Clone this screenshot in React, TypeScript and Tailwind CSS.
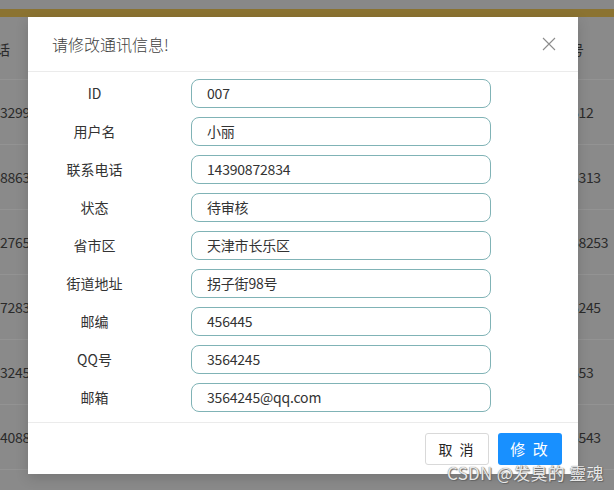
import React from "react";

const rows = [
  { l: "32990876", r: "15612" },
  { l: "88632145", r: "156313" },
  { l: "27654321", r: "1568253" },
  { l: "72831234", r: "156245" },
  { l: "32456789", r: "15653" },
  { l: "40881234", r: "156543" },
];

const fields = [
  { label: "ID", value: "007" },
  { label: "用户名", value: "小丽" },
  { label: "联系电话", value: "14390872834" },
  { label: "状态", value: "待审核" },
  { label: "省市区", value: "天津市长乐区" },
  { label: "街道地址", value: "拐子街98号" },
  { label: "邮编", value: "456445" },
  { label: "QQ号", value: "3564245" },
  { label: "邮箱", value: "3564245@qq.com" },
];

const font = { fontFamily: '"Noto Sans CJK SC", "Noto Sans", sans-serif' };

export default function App() {
  return (
    <div
      className="relative w-[614px] h-[490px] overflow-hidden bg-[#8a8a8a] text-[14px]"
      style={font}
    >
      {/* background page (dimmed) */}
      <div className="flex flex-col">
        <div className="h-[9px] bg-[#888888]" />
        <div className="h-[8px] bg-[#8b7331]" />
        <div className="h-[63px] border-b border-[#939393] flex items-center pt-[2px] text-[#2a2a2a]">
          <span className="-ml-[18px] w-[60px]">电话</span>
          <span className="ml-auto w-[58px]">账号</span>
        </div>
        {rows.map((r, i) => (
          <div
            key={i}
            className="h-[65px] border-b border-[#939393] flex items-center text-[#2a2a2a] tracking-[-0.3px]"
          >
            <span className="w-[100px]">{r.l}</span>
            <span className="ml-[456px]">{r.r}</span>
          </div>
        ))}
      </div>

      {/* modal */}
      <div className="absolute left-[28px] top-[17px] w-[550px] h-[457px] bg-white flex flex-col shadow-[0_4px_12px_rgba(0,0,0,0.15)]">
        <div className="h-[55px] border-b border-[#ebebeb] flex items-center pl-[24px] pr-[18px]">
          <span className="text-[16px] text-[#404040] font-light">请修改通讯信息!</span>
          <button className="ml-auto w-[22px] h-[22px] flex items-center justify-center text-[#8c8c8c]">
            <svg width="14" height="14" viewBox="0 0 14 14" fill="none" stroke="currentColor" strokeWidth="1.1">
              <path d="M1 1 L13 13 M13 1 L1 13" />
            </svg>
          </button>
        </div>
        <div className="flex-1 flex flex-col gap-[9px] pt-[7px] pb-[10px] border-b border-[#ebebeb]">
          {fields.map((f) => (
            <div key={f.label} className="flex items-center h-[29px]">
              <span className="w-[133px] text-center text-[#333333]">{f.label}</span>
              <div className="ml-[30px] w-[300px] h-[29px] border border-[#80b3b6] rounded-[8px] flex items-center pl-[15px] text-[#333333] tracking-[-0.2px]">
                {f.value}
              </div>
            </div>
          ))}
        </div>
        <div className="h-[51px] flex items-start justify-end gap-[9px] pt-[10px] pr-[16px]">
          <button className="w-[64px] h-[32px] border border-[#d9d9d9] rounded-[3px] bg-white text-[#262626] text-[14px] tracking-[2px]">
            取 消
          </button>
          <button className="w-[64px] h-[32px] rounded-[3px] bg-[#1890ff] text-white text-[15px] tracking-[2px]">
            修 改
          </button>
        </div>
      </div>

      {/* watermark */}
      <div className="absolute left-[447px] top-[460px] text-[17px] tracking-[0.3px] text-[#e8e8e8] whitespace-nowrap [text-shadow:0_0_1px_#555,1px_1px_1px_#666]">
        CSDN @发臭的 靈魂
      </div>
    </div>
  );
}
